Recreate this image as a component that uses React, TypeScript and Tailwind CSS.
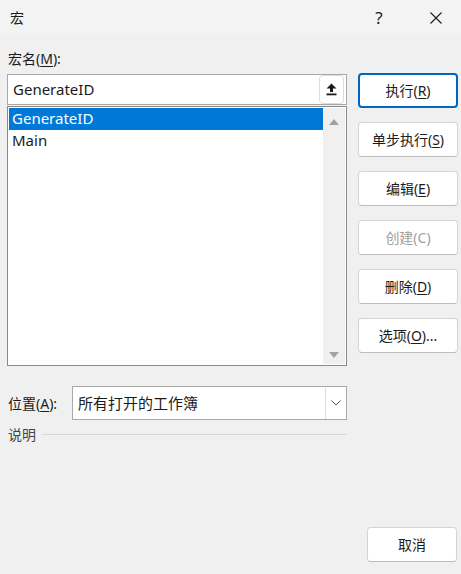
import React from "react";

const font = { fontFamily: '"Noto Sans", "Noto Sans CJK SC", sans-serif' };

function Btn({ children, primary, disabled }: { children: React.ReactNode; primary?: boolean; disabled?: boolean }) {
  return (
    <div
      className={
        "h-[35px] w-[100px] flex items-center justify-center rounded-[4px] bg-white text-[14px] " +
        (primary
          ? "border-2 border-[#0067c0]"
          : "border border-[#d4d4d4] border-b-[#bdbdbd]") +
        (disabled ? " text-[#a0a0a0] bg-[#fbfbfb]" : " text-[#1b1b1b]")
      }
    >
      {children}
    </div>
  );
}

const U = ({ c }: { c: string }) => <span className="underline underline-offset-2">{c}</span>;

export default function App() {
  return (
    <div className="w-[461px] h-[574px] bg-[#f0f0f0] flex flex-col text-[#1b1b1b]" style={font}>
      {/* title bar */}
      <div className="h-[35px] bg-[#f3f3f3] flex items-center">
        <div className="pl-[10px] text-[14px] flex-1 -mt-[1px]">宏</div>
        <div className="w-[30px] text-center text-[17px] mr-[27px]">?</div>
        <div className="w-[30px] flex justify-center mr-[10px]">
          <svg width="14" height="14" viewBox="0 0 14 14">
            <path d="M1.5 1.5 L12.5 12.5 M12.5 1.5 L1.5 12.5" stroke="#1b1b1b" strokeWidth="1.1" />
          </svg>
        </div>
      </div>

      <div className="flex pl-[7px] pr-[3px] flex-1">
        {/* left column */}
        <div className="w-[340px] shrink-0 flex flex-col">
          <div className="mt-[14px] h-[20px] leading-[20px] pl-[1px] text-[14px]">
            宏名(<U c="M" />):
          </div>
          <div className="mt-[5px] h-[31px] border border-[#a8a8a8] bg-white flex items-center">
            <div className="flex-1 pl-[5px] text-[15px]">GenerateID</div>
            <div className="w-[25px] h-[29px] mr-[2px] rounded-[4px] border border-[#dcdcdc] bg-white flex items-center justify-center">
              <svg width="11" height="13" viewBox="0 0 11 13">
                <path d="M5.5 0.5 L10.5 5.5 L7 5.5 L7 9 L4 9 L4 5.5 L0.5 5.5 Z" fill="#1b1b1b" />
                <rect x="0.5" y="10.5" width="10" height="1.8" fill="#1b1b1b" />
              </svg>
            </div>
          </div>
          <div className="mt-[1px] h-[260px] border border-[#8a8a8a] bg-white flex">
            <div className="flex-1 pt-[1px] pl-[1px]">
              <div className="h-[22px] bg-[#0078d7] text-white text-[15px] leading-[21px] pl-[3px]">GenerateID</div>
              <div className="h-[22px] text-[15px] leading-[21px] pl-[3px]">Main</div>
            </div>
            <div className="w-[22px] bg-[#f0f0f0] flex flex-col items-center justify-between pt-[11px] pb-[6px] mr-[1px] mt-[1px] mb-[1px]">
              <svg width="10" height="6" viewBox="0 0 10 6"><path d="M5 0 L10 6 L0 6 Z" fill="#a3a3a3" /></svg>
              <svg width="10" height="6" viewBox="0 0 10 6"><path d="M0 0 L10 0 L5 6 Z" fill="#a3a3a3" /></svg>
            </div>
          </div>

          <div className="mt-[20px] flex items-center">
            <div className="w-[65px] pl-[1px] text-[14px]">
              位置(<U c="A" />):
            </div>
            <div className="flex-1 h-[34px] border border-[#a8a8a8] bg-white flex items-center">
              <div className="flex-1 pl-[5px] text-[15px]">所有打开的工作簿</div>
              <div className="w-[20px] h-[31px] mr-[1px] border-l border-[#dcdcdc] bg-white flex items-center justify-center">
                <svg width="10" height="6" viewBox="0 0 10 6">
                  <path d="M0.5 0.5 L5 5 L9.5 0.5" stroke="#555" strokeWidth="1" fill="none" />
                </svg>
              </div>
            </div>
          </div>

          <div className="mt-[4px] flex items-center">
            <div className="pl-[1px] text-[14px] text-[#444]">说明</div>
            <div className="flex-1 ml-[6px] h-px bg-[#d6d6d6]" />
          </div>
        </div>

        {/* right column */}
        <div className="ml-[11px] flex flex-col shrink-0">
          <div className="mt-[38px] flex flex-col gap-[14px]">
            <Btn primary>
              执行(<U c="R" />)
            </Btn>
            <Btn>
              单步执行(<U c="S" />)
            </Btn>
            <Btn>
              编辑(<U c="E" />)
            </Btn>
            <Btn disabled>创建(C)</Btn>
            <Btn>
              删除(<U c="D" />)
            </Btn>
            <Btn>
              选项(<U c="O" />)...
            </Btn>
          </div>
        </div>
      </div>

      <div className="flex justify-end pr-[4px] pb-[12px]">
        <div className="h-[35px] w-[90px] flex items-center justify-center rounded-[4px] bg-white border border-[#d4d4d4] border-b-[#bdbdbd] text-[14px]">
          取消
        </div>
      </div>
    </div>
  );
}
